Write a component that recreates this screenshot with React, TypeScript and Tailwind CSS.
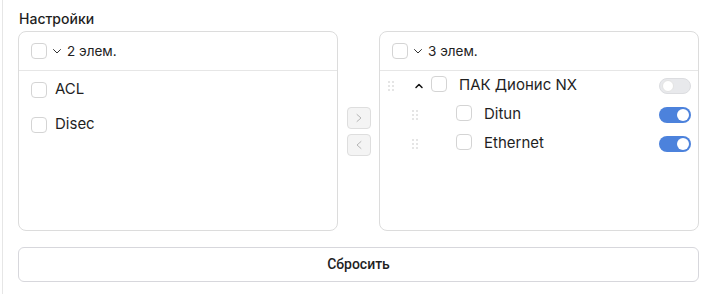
import React from "react";

const font = { fontFamily: "Inter, 'Noto Sans', sans-serif" };

function Checkbox() {
  return <span className="inline-block w-4 h-4 shrink-0 rounded-[4px] border border-[#d4d4d4] bg-white" />;
}

function Chevron({ up }: { up?: boolean }) {
  if (up) {
    return (
      <svg width="10" height="10" viewBox="0 0 10 10" className="shrink-0">
        <path d="M2 6.5 L5 3.5 L8 6.5" fill="none" stroke="#111" strokeWidth="1.5" strokeLinecap="round" strokeLinejoin="round" />
      </svg>
    );
  }
  return (
    <svg width="10" height="10" viewBox="0 0 10 10" className="shrink-0">
      <path d="M1.5 3.5 L5 7 L8.5 3.5" fill="none" stroke="#333" strokeWidth="1" strokeLinecap="round" strokeLinejoin="round" />
    </svg>
  );
}

function Grip() {
  return (
    <svg width="6" height="10" viewBox="0 0 6 10" className="shrink-0">
      {[1, 5].map((x) =>
        [1, 5, 9].map((y) => <circle key={`${x}-${y}`} cx={x} cy={y} r="0.8" fill="#c4c4c4" />)
      )}
    </svg>
  );
}

function Toggle({ on }: { on: boolean }) {
  return (
    <span
      className={`relative inline-flex w-8 h-4 shrink-0 rounded-full items-center ${
        on ? "bg-[#4c82dc]" : "bg-[#e8e9ec] border border-[#dcdde0]"
      }`}
    >
      <span
        className={`absolute w-3 h-3 rounded-full bg-white ${on ? "right-[2px]" : "left-[2px] border border-[#e3e3e3]"}`}
      />
    </span>
  );
}

function Header({ count }: { count: number }) {
  return (
    <div className="h-[39px] flex items-center gap-[5px] pl-3 border-b border-[#e6e6e6]">
      <Checkbox />
      <Chevron />
      <span className="text-[13.5px] text-[#222]">{count} элем.</span>
    </div>
  );
}

function NavButton({ dir }: { dir: "r" | "l" }) {
  return (
    <button className="w-6 h-[22px] rounded-[4px] border border-[#dedede] bg-[#f4f4f4] flex items-center justify-center">
      <svg width="8" height="10" viewBox="0 0 8 10">
        <path
          d={dir === "r" ? "M2 1.5 L6 5 L2 8.5" : "M6 1.5 L2 5 L6 8.5"}
          fill="none"
          stroke="#b5b5b5"
          strokeWidth="1"
          strokeLinecap="round"
          strokeLinejoin="round"
        />
      </svg>
    </button>
  );
}

export default function App() {
  const left = ["ACL", "Disec"];
  const children = ["Ditun", "Ethernet"];

  return (
    <div className="w-[711px] h-[294px] bg-white" style={font}>
      <div className="ml-[2px] h-full border-l border-[#e6e6e6] pl-[15px] pt-[9px]">
        <div className="text-[14px] font-medium text-[#1f1f1f] leading-5 pl-px mb-[2px]">Настройки</div>

        <div className="flex w-[681px]">
          <div className="w-[320px] h-[200px] rounded-lg border border-[#dcdcdc]">
            <Header count={2} />
            <div className="pt-px">
              {left.map((t) => (
                <div key={t} className="h-[35px] flex items-center gap-2 pl-3">
                  <Checkbox />
                  <span className="text-[15px] text-[#1f1f1f]">{t}</span>
                </div>
              ))}
            </div>
          </div>

          <div className="w-[41px] flex flex-col items-center justify-center gap-[5px]">
            <NavButton dir="r" />
            <NavButton dir="l" />
          </div>

          <div className="w-[320px] h-[200px] rounded-lg border border-[#dcdcdc]">
            <Header count={3} />
            <div className="pr-[7px]">
              <div className="h-[29px] flex items-center pl-2">
                <Grip />
                <span className="ml-[19px] w-[11px] flex justify-center">
                  <Chevron up />
                </span>
                <span className="ml-[7px]"><Checkbox /></span>
                <span className="ml-3 text-[15px] text-[#1f1f1f] flex-1">ПАК Дионис NX</span>
                <Toggle on={false} />
              </div>
              {children.map((t) => (
                <div key={t} className="h-[29px] flex items-center pl-8">
                  <Grip />
                  <span className="ml-[38px]"><Checkbox /></span>
                  <span className="ml-3 text-[15px] text-[#1f1f1f] flex-1">{t}</span>
                  <Toggle on />
                </div>
              ))}
            </div>
          </div>
        </div>

        <button
          className="mt-4 w-[681px] h-[35px] rounded-md border border-[#d7d7dc] bg-white text-[14px] font-medium text-[#1f1f1f]"
          style={{ fontFamily: "Roboto, sans-serif" }}
        >
          Сбросить
        </button>
      </div>
    </div>
  );
}
